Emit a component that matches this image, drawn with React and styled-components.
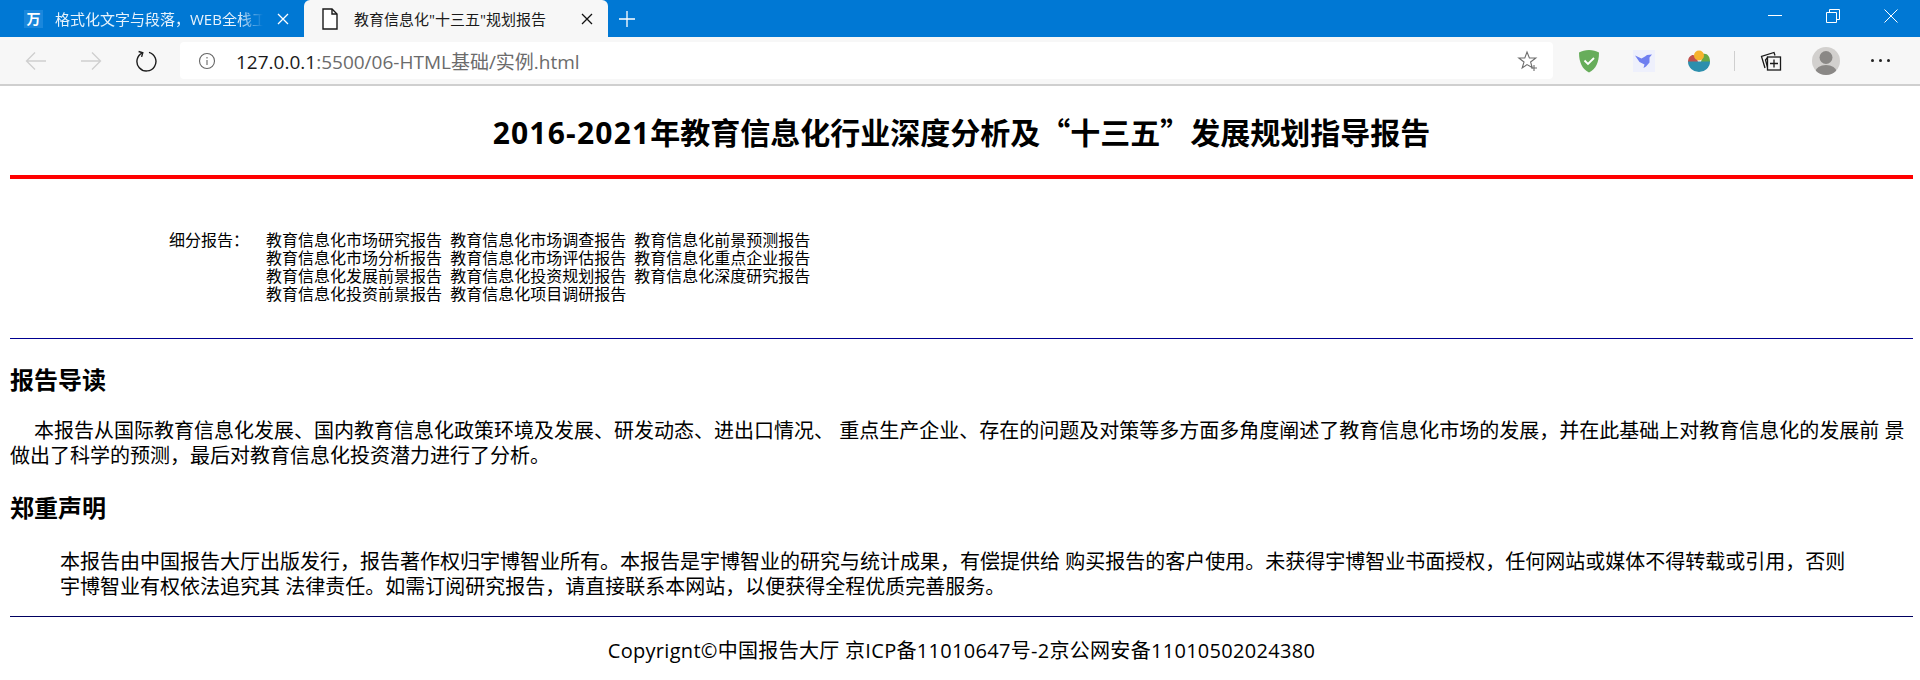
import React from 'react';
import styled, { createGlobalStyle } from 'styled-components';

const GlobalStyle = createGlobalStyle`
  html, body {
    margin: 0;
    padding: 0;
    background: #fff;
    overflow: hidden;
  }
  body {
    font-family: "Open Sans", "Noto Sans CJK SC", sans-serif;
    color: #000;
  }
`;

const subReports = [
  ['教育信息化市场研究报告', '教育信息化市场调查报告', '教育信息化前景预测报告'],
  ['教育信息化市场分析报告', '教育信息化市场评估报告', '教育信息化重点企业报告'],
  ['教育信息化发展前景报告', '教育信息化投资规划报告', '教育信息化深度研究报告'],
  ['教育信息化投资前景报告', '教育信息化项目调研报告'],
];

const CloseIcon = ({ color }) => (
  <svg width="12" height="12" viewBox="0 0 12 12" fill="none" stroke={color} strokeWidth="1.3">
    <path d="M1 1l10 10M11 1L1 11" />
  </svg>
);

const App = () => (
  <>
    <GlobalStyle />
    <Browser>
      <TabStrip>
        <Tab>
          <WanFavicon>万</WanFavicon>
          <TabTitle>格式化文字与段落，WEB全栈工程师</TabTitle>
          <TabClose><CloseIcon color="#fff" /></TabClose>
        </Tab>
        <Tab active>
          <svg width="20" height="24" viewBox="0 0 20 24" fill="#fff" stroke="#1a1a1a" strokeWidth="1.4">
            <path d="M3 2h9l5 5v15H3z" />
            <path d="M12 2v5h5" fill="none" />
          </svg>
          <TabTitle active>教育信息化"十三五"规划报告</TabTitle>
          <TabClose><CloseIcon color="#111" /></TabClose>
        </Tab>
        <NewTab>
          <svg width="16" height="16" viewBox="0 0 16 16" fill="none" stroke="#fff" strokeWidth="1.3">
            <path d="M8 0v16M0 8h16" />
          </svg>
        </NewTab>
        <WindowControls>
          <WindowButton>
            <svg width="14" height="14" viewBox="0 0 14 14" fill="none" stroke="#fff" strokeWidth="1">
              <path d="M0 6.5h14" />
            </svg>
          </WindowButton>
          <WindowButton>
            <svg width="14" height="14" viewBox="0 0 14 14" fill="none" stroke="#fff" strokeWidth="1">
              <path d="M.5 3.5h10v10H.5zM3.5 3.5v-3h10v10h-3" />
            </svg>
          </WindowButton>
          <WindowButton>
            <svg width="14" height="14" viewBox="0 0 14 14" fill="none" stroke="#fff" strokeWidth="1">
              <path d="M.5.5l13 13M13.5.5l-13 13" />
            </svg>
          </WindowButton>
        </WindowControls>
      </TabStrip>

      <Toolbar>
        <NavButton>
          <svg width="22" height="20" viewBox="0 0 22 20" fill="none" stroke="#cfcfcf" strokeWidth="1.3">
            <path d="M21 10H1.5M10 1.5L1.5 10l8.5 8.5" />
          </svg>
        </NavButton>
        <NavButton>
          <svg width="22" height="20" viewBox="0 0 22 20" fill="none" stroke="#cfcfcf" strokeWidth="1.3">
            <path d="M1 10h19.5M12 1.5l8.5 8.5-8.5 8.5" />
          </svg>
        </NavButton>
        <NavButton>
          <svg width="22" height="22" viewBox="0 0 22 22" fill="none" stroke="#1c1c1c" strokeWidth="1.4">
            <path d="M7.5 2.8A9.5 9.5 0 1 0 14 2.3" />
            <path d="M3.6 1.5l4.2 1.3-1.2 4.1" />
          </svg>
        </NavButton>
        <AddressBar>
          <InfoIcon viewBox="0 0 18 18" fill="none" stroke="#666" strokeWidth="1.1">
            <circle cx="9" cy="9" r="7.5" />
            <path d="M9 8v5" />
            <path d="M9 5v1.4" />
          </InfoIcon>
          <Url>
            <UrlHost>127.0.0.1</UrlHost>:5500/06-HTML基础/实例.html
          </Url>
          <svg width="22" height="22" viewBox="0 0 22 22" fill="none" stroke="#6e6e6e" strokeWidth="1.1">
            <path d="M10 2l2.4 6h6.4l-5.2 4 1.6 5.6L10 14.6l-4.8 3.4L7 12 1.8 8h6z" />
            <path d="M17 15v6M14 18h6" />
          </svg>
        </AddressBar>
        <Actions>
          <ActionButton>
            <svg width="22" height="24" viewBox="0 0 22 24">
              <path d="M11 1c4 0 7 1 10 2.5C21 13 18 20 11 23.5 4 20 1 13 1 3.5 4 2 7 1 11 1z" fill="#67ad5b" />
              <path d="M6.5 11.5l3.5 3.5 6-6" fill="none" stroke="#fff" strokeWidth="1.8" />
            </svg>
          </ActionButton>
          <ActionButton>
            <svg width="22" height="22" viewBox="0 0 22 22">
              <rect width="22" height="22" fill="#eef0fc" />
              <path d="M2 5.5l6.5 3 3.5-2 2-1.5 5-.5-2.500 3v5l-3.500 4-2.500 1.500 1-3.500-5-2.500z" fill="#6f7ff0" />
            </svg>
          </ActionButton>
          <ActionButton>
            <svg width="22" height="22" viewBox="0 0 22 22">
              <path d="M0 12c0-5 3-7 5-7s4 3 5 7z" fill="#c0504d" />
              <path d="M15 4c4-1 7 2 7 8h-9z" fill="#68a845" />
              <circle cx="11" cy="5.5" r="5" fill="#f5b32e" />
              <path d="M0 11.500h22a11 10.500 0 0 1-22 0z" fill="#2d8fad" />
            </svg>
          </ActionButton>
          <ActionDivider />
          <ActionButton>
            <svg width="22" height="24" viewBox="0 0 22 24" fill="none" stroke="#1a1a1a" strokeWidth="1.3">
              <path d="M5 19L1.5 7.5 14 3.5l1 3" />
              <path d="M8 20l-2.500-9L8 8" />
              <rect x="7.5" y="8" width="13" height="13" fill="#f7f7f7" />
              <path d="M14 10.5v8M10 14.5h8" />
            </svg>
          </ActionButton>
          <ActionButton>
            <Avatar>
              <svg width="28" height="28" viewBox="0 0 28 28">
                <circle cx="14" cy="10.5" r="6.5" fill="#8a8886" />
                <ellipse cx="14" cy="24.5" rx="10.5" ry="6.5" fill="#8a8886" />
              </svg>
            </Avatar>
          </ActionButton>
          <ActionButton>
            <Dots>
              <Dot />
              <Dot />
              <Dot />
            </Dots>
          </ActionButton>
        </Actions>
      </Toolbar>

      <Page>
        <Title>
          <TitleYears>2016-2021</TitleYears>年教育信息化行业深度分析及“十三五”发展规划指导报告
        </Title>
        <RedRule />
        <SubReports>
          <SubLabel>细分报告：</SubLabel>
          <SubList>
            {subReports.map((row) => (
              <SubRow key={row[0]}>{row.join(' ')}</SubRow>
            ))}
          </SubList>
        </SubReports>
        <NavyRule top="35px" />
        <Heading>报告导读</Heading>
        <Intro>
          本报告从国际教育信息化发展、国内教育信息化政策环境及发展、研发动态、进出口情况、 重点生产企业、存在的问题及对策等多方面多角度阐述了教育信息化市场的发展，并在此基础上对教育信息化的发展前 景做出了科学的预测，最后对教育信息化投资潜力进行了分析。
        </Intro>
        <Heading second>郑重声明</Heading>
        <Statement>
          本报告由中国报告大厅出版发行，报告著作权归宇博智业所有。本报告是宇博智业的研究与统计成果，有偿提供给 购买报告的客户使用。未获得宇博智业书面授权，任何网站或媒体不得转载或引用，否则宇博智业有权依法追究其 法律责任。如需订阅研究报告，请直接联系本网站，以便获得全程优质完善服务。
        </Statement>
        <NavyRule top="17px" dark />
        <Footer>Copyrignt©中国报告大厅 京ICP备11010647号-2京公网安备11010502024380</Footer>
      </Page>
    </Browser>
  </>
);

const Browser = styled.div`
  width: 1920px;
  height: 680px;
  overflow: hidden;
  display: flex;
  flex-direction: column;
`;

const TabStrip = styled.div`
  display: flex;
  align-items: stretch;
  height: 37px;
  background: #0078d4;
`;

const Tab = styled.div`
  display: flex;
  align-items: center;
  width: 304px;
  padding: 0 13px 0 ${(p) => (p.active ? '16px' : '24px')};
  box-sizing: border-box;
  background: ${(p) => (p.active ? '#f7f7f7' : 'transparent')};
  border-radius: ${(p) => (p.active ? '6px 6px 0 0' : '0')};
  gap: ${(p) => (p.active ? '14px' : '12px')};
`;

const WanFavicon = styled.span`
  flex: none;
  width: 19px;
  height: 18px;
  background: #1a87dc;
  color: #fff;
  font-size: 14px;
  font-weight: 700;
  line-height: 18px;
  text-align: center;
`;

const TabTitle = styled.span`
  flex: 1;
  min-width: 0;
  white-space: nowrap;
  overflow: hidden;
  font-size: 15px;
  line-height: 20px;
  color: ${(p) => (p.active ? '#1a1a1a' : '#e8f3fc')};
  ${(p) => !p.active && 'mask-image: linear-gradient(90deg, #000 88%, transparent);'}
`;

const TabClose = styled.span`
  flex: none;
  display: flex;
  width: 16px;
  justify-content: center;
`;

const NewTab = styled.div`
  display: flex;
  align-items: center;
  justify-content: center;
  width: 38px;
`;

const WindowControls = styled.div`
  display: flex;
  margin-left: auto;
`;

const WindowButton = styled.div`
  display: flex;
  align-items: center;
  justify-content: center;
  width: 58px;
  padding-bottom: 6px;
`;

const Toolbar = styled.div`
  display: flex;
  align-items: center;
  height: 47px;
  padding-left: 8px;
  background: #f7f7f7;
  border-bottom: 2px solid #cfcfcf;
  box-sizing: content-box;
`;

const NavButton = styled.div`
  display: flex;
  align-items: center;
  justify-content: center;
  width: 55px;
  flex: none;
`;

const AddressBar = styled.div`
  display: flex;
  align-items: center;
  width: 1373px;
  height: 37px;
  margin-left: 7px;
  padding: 0 14px 0 18px;
  box-sizing: border-box;
  background: #fff;
  border-radius: 4px;
  flex: none;
`;

const InfoIcon = styled.svg`
  width: 18px;
  height: 18px;
  flex: none;
`;

const Url = styled.div`
  flex: 1;
  margin-left: 20px;
  font-size: 19px;
  color: #6b6b6b;
  white-space: nowrap;
`;

const UrlHost = styled.span`
  color: #1a1a1a;
`;

const Actions = styled.div`
  display: flex;
  align-items: center;
  margin-left: 8px;
`;

const ActionButton = styled.div`
  display: flex;
  align-items: center;
  justify-content: center;
  width: 55px;
`;

const ActionDivider = styled.div`
  width: 1px;
  height: 20px;
  margin: 0 8px;
  background: #cfcfcf;
`;

const Avatar = styled.div`
  width: 28px;
  height: 28px;
  border-radius: 50%;
  overflow: hidden;
  background: #d2d0ce;
`;

const Dots = styled.div`
  display: flex;
  gap: 5px;
`;

const Dot = styled.span`
  width: 3px;
  height: 3px;
  border-radius: 50%;
  background: #222;
`;

const Page = styled.main`
  flex: 1;
  padding: 8px 7px 8px 10px;
  background: #fff;
`;

const Title = styled.h1`
  margin: 15px 0 20px;
  font-family: "Noto Sans CJK SC", sans-serif;
  font-size: 30px;
  font-weight: 700;
  line-height: 44px;
  text-align: center;
`;

const TitleYears = styled.span`
  font-family: "Open Sans", sans-serif;
  letter-spacing: 1.2px;
`;

const RedRule = styled.hr`
  height: 4px;
  margin: 0;
  border: 0;
  background: #f00;
`;

const SubReports = styled.div`
  display: grid;
  grid-template-columns: 97px auto;
  justify-content: start;
  margin: 52px 0 0 159px;
  font-size: 16px;
  line-height: 18px;
  color: #000;
`;

const SubLabel = styled.div``;

const SubList = styled.div`
  white-space: pre;
  word-spacing: 4px;
`;

const SubRow = styled.div``;

const NavyRule = styled.hr`
  height: 1px;
  margin: ${(p) => p.top} 0 0;
  border: 0;
  background: ${(p) => (p.dark ? '#000060' : '#000090')};
`;

const Heading = styled.h2`
  margin: ${(p) => (p.second ? '24px' : '25px')} 0 0;
  font-size: 24px;
  font-weight: 700;
  line-height: 32px;
`;

const Intro = styled.p`
  margin: 22px 0 0;
  font-size: 20px;
  line-height: 25px;
  text-indent: 24px;
`;

const Statement = styled.p`
  margin: 25px 0 0;
  padding: 0 50px;
  font-size: 20px;
  line-height: 25px;
`;

const Footer = styled.div`
  margin-top: 21px;
  font-size: 20px;
  line-height: 26px;
  letter-spacing: 0.3px;
  text-align: center;
`;

export default App;
